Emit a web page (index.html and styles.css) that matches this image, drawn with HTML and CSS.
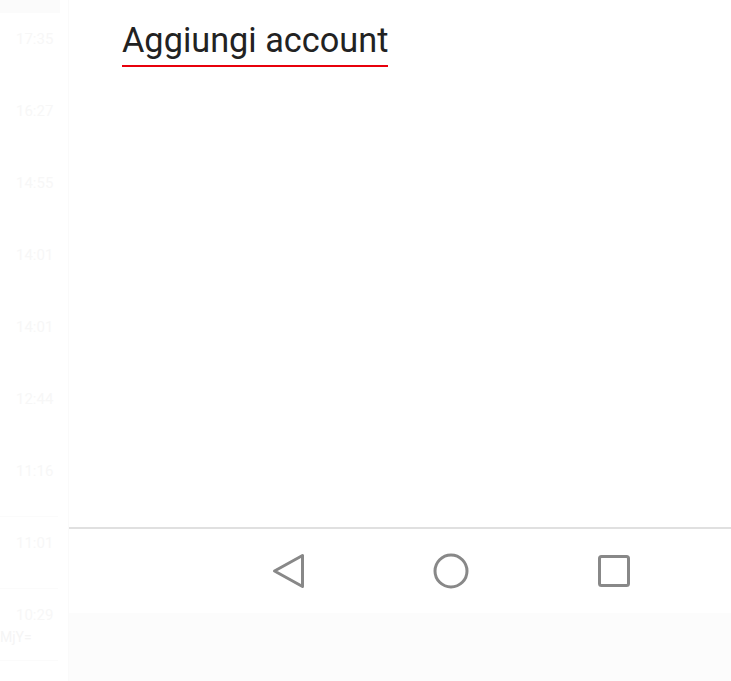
FILE: index.html
```html
<!DOCTYPE html>
<html>
<head>
    <title>Aggiungi account</title>
    <link rel="stylesheet" href="styles.css">
</head>
<body>
    <div class="screen">
        <!-- faded list behind the sheet -->
        <div class="bg-list">
            <div class="bg-top"></div>
            <div class="bg-row">17:35</div>
            <div class="bg-row">16:27</div>
            <div class="bg-row">14:55</div>
            <div class="bg-row">14:01</div>
            <div class="bg-row">14:01</div>
            <div class="bg-row">12:44</div>
            <div class="bg-row sep">11:16</div>
            <div class="bg-row sep">11:01</div>
            <div class="bg-row sep">10:29<span class="bg-code">MjY=</span></div>
        </div>

        <div class="panel">
            <div class="panel-head">
                <h1 class="title">Aggiungi account</h1>
            </div>
            <div class="panel-body"></div>
            <div class="nav-bar">
                <span class="nav-btn">
                    <svg width="34" height="36" viewBox="0 0 34 36"><path d="M31.5 2.5 L31.5 33.5 L3.5 18 Z" fill="none" stroke="#888" stroke-width="3" stroke-linejoin="round"/></svg>
                </span>
                <span class="nav-btn">
                    <svg width="36" height="36" viewBox="0 0 36 36"><circle cx="18" cy="18" r="16" fill="none" stroke="#888" stroke-width="3"/></svg>
                </span>
                <span class="nav-btn">
                    <svg width="34" height="34" viewBox="0 0 34 34"><rect x="2.5" y="2.5" width="29" height="29" rx="2" fill="none" stroke="#888" stroke-width="3"/></svg>
                </span>
            </div>
            <div class="panel-foot"></div>
        </div>
    </div>
</body>
</html>
```

FILE: styles.css
```css
html, body {
    margin: 0;
    padding: 0;
    background: #fff;
}
body {
    font-family: Roboto, "Noto Sans", sans-serif;
}
.screen {
    display: grid;
    grid-template-columns: 69px 1fr;
    width: 731px;
    height: 681px;
    overflow: hidden;
}
.bg-list {
    border-right: 1px solid #fafafa;
    display: flex;
    flex-direction: column;
}
.bg-top {
    height: 13px;
    width: 60px;
    background: #fbfbfb;
}
.bg-row {
    position: relative;
    height: 72px;
    box-sizing: border-box;
    padding-top: 17px;
    padding-left: 16px;
    font-size: 15px;
    line-height: 18px;
    color: #f7f7f7;
    flex-shrink: 0;
}
.bg-row.sep {
    border-bottom: 1px solid #fbfbfb;
    width: 58px;
}
.bg-code {
    position: absolute;
    left: 0;
    top: 39px;
    font-size: 14px;
    color: #f5f5f5;
}
.panel {
    display: flex;
    flex-direction: column;
    min-height: 0;
}
.panel-head {
    padding: 20px 0 0 53px;
}
.title {
    display: inline-block;
    margin: 0;
    font-size: 34.3px;
    font-weight: 400;
    line-height: 40px;
    color: #222;
    padding-bottom: 5px;
    border-bottom: 2px solid #e8000b;
}
.panel-body {
    flex: 1;
}
.nav-bar {
    height: 84px;
    border-top: 2px solid #e0e0e0;
    display: flex;
    align-items: center;
    padding-left: 202px;
    gap: 128px;
    flex-shrink: 0;
}
.nav-btn {
    display: flex;
}
.panel-foot {
    height: 68px;
    background: #fcfcfc;
    flex-shrink: 0;
}
```
